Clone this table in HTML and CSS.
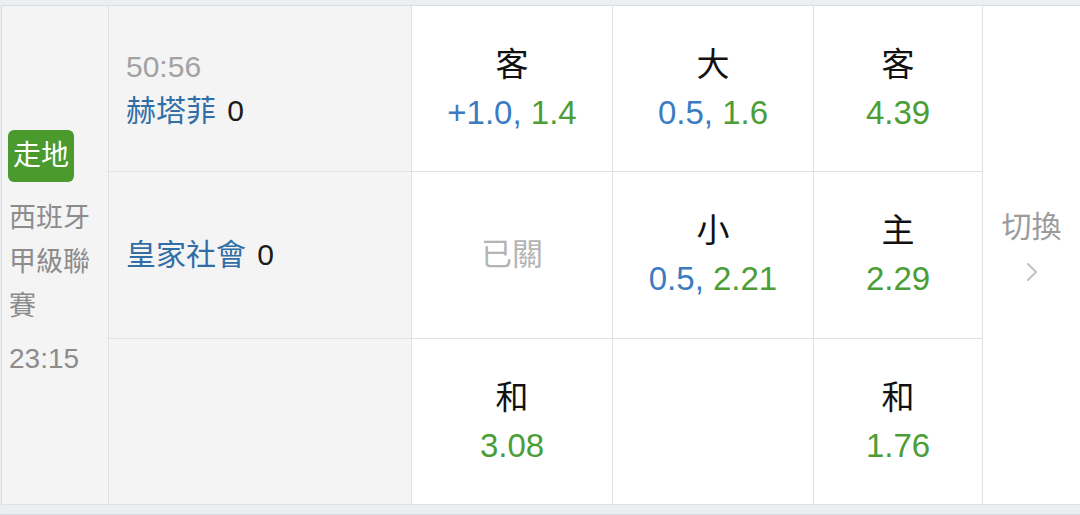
FILE: index.html
```html
<!DOCTYPE html>
<html lang="zh-Hant">
<head>
<meta charset="utf-8">
<link rel="stylesheet" href="styles.css">
</head>
<body>
<div class="card">
  <div class="cell league">
    <span class="badge">走地</span>
    <div class="league-name">西班牙甲級聯賽</div>
    <div class="kickoff">23:15</div>
  </div>

  <div class="cell team r1">
    <div class="clock">50:56</div>
    <div><span class="name">赫塔菲</span> <span class="score">0</span></div>
  </div>
  <div class="cell odds r1 white">
    <div class="label">客</div>
    <div class="val"><span class="blue">+1.0,</span> <span class="green">1.4</span></div>
  </div>
  <div class="cell odds r1 white">
    <div class="label">大</div>
    <div class="val"><span class="blue">0.5,</span> <span class="green">1.6</span></div>
  </div>
  <div class="cell odds r1 white">
    <div class="label">客</div>
    <div class="val"><span class="green">4.39</span></div>
  </div>

  <div class="cell switch">
    <div class="switch-label">切換</div>
    <svg class="chev" width="14" height="22" viewBox="0 0 14 22"><polyline points="3,3 11,11 3,19" fill="none" stroke="#c2c2c2" stroke-width="2" stroke-linecap="round" stroke-linejoin="round"/></svg>
  </div>

  <div class="cell team r2">
    <div><span class="name">皇家社會</span> <span class="score">0</span></div>
  </div>
  <div class="cell odds r2 white">
    <div class="closed">已關</div>
  </div>
  <div class="cell odds r2 white">
    <div class="label">小</div>
    <div class="val"><span class="blue">0.5,</span> <span class="green">2.21</span></div>
  </div>
  <div class="cell odds r2 white">
    <div class="label">主</div>
    <div class="val"><span class="green">2.29</span></div>
  </div>

  <div class="cell team r3"></div>
  <div class="cell odds r3 white">
    <div class="label">和</div>
    <div class="val"><span class="green">3.08</span></div>
  </div>
  <div class="cell odds r3 white"></div>
  <div class="cell odds r3 white">
    <div class="label">和</div>
    <div class="val"><span class="green">1.76</span></div>
  </div>
</div>
</body>
</html>
```

FILE: styles.css
```css
* { box-sizing: border-box; }

html, body {
  margin: 0;
  padding: 0;
  background: #eceff1;
  font-family: "Liberation Sans", "Noto Sans CJK TC", sans-serif;
}

body {
  padding: 5px 0 0 1px;
  height: 515px;
  overflow: hidden;
  border-bottom: 1px solid #d3dce4;
}

.card {
  display: grid;
  grid-template-columns: 107px 303px 201px 201px 169px 1fr;
  grid-template-rows: 166px 167px 166px;
  border-top: 1px solid #d9dee3;
  border-left: 1px solid #d9dee3;
  background: #f4f4f5;
}

.cell {
  border-right: 1px solid #dde2e7;
  border-bottom: 1px solid #dde2e7;
}

.white { background: #fff; }

.league {
  grid-row: 1 / 4;
  grid-column: 1;
  display: flex;
  flex-direction: column;
  justify-content: center;
  align-items: flex-start;
  padding: 0 6px;
  color: #8c8c8c;
  font-size: 27px;
  line-height: 44px;
}

.badge {
  display: inline-block;
  background: #4a9a2d;
  color: #fff;
  border-radius: 6px;
  padding: 0 5px;
  height: 52px;
  line-height: 52px;
  font-size: 28px;
  margin-bottom: 14px;
}

.league-name { padding-left: 1px; }

.kickoff {
  margin-top: 9px;
  font-size: 28px;
  padding-left: 1px;
}

.team {
  grid-column: 2;
  display: flex;
  flex-direction: column;
  justify-content: center;
  padding-left: 17px;
  font-size: 30px;
  line-height: 44px;
}

.team.r3 { grid-row: 3; }

.clock { color: #a2a2a2; }
.name { color: #326ea6; }
.score { color: #1a1a1a; margin-left: 3px; }

.odds {
  display: flex;
  flex-direction: column;
  justify-content: center;
  align-items: center;
  font-size: 33px;
  line-height: 48px;
}

.label { color: #111; }
.blue { color: #3b7cc1; }
.green { color: #4b9e37; }
.closed { color: #b4b4b4; font-size: 31px; }

.switch {
  grid-row: 1 / 4;
  grid-column: 6;
  background: #fff;
  display: flex;
  flex-direction: column;
  align-items: center;
  justify-content: center;
  padding-bottom: 20px;
  color: #9b9b9b;
  font-size: 30px;
  line-height: 40px;
  border-right: none;
}

.chev { margin-top: 14px; }
```
